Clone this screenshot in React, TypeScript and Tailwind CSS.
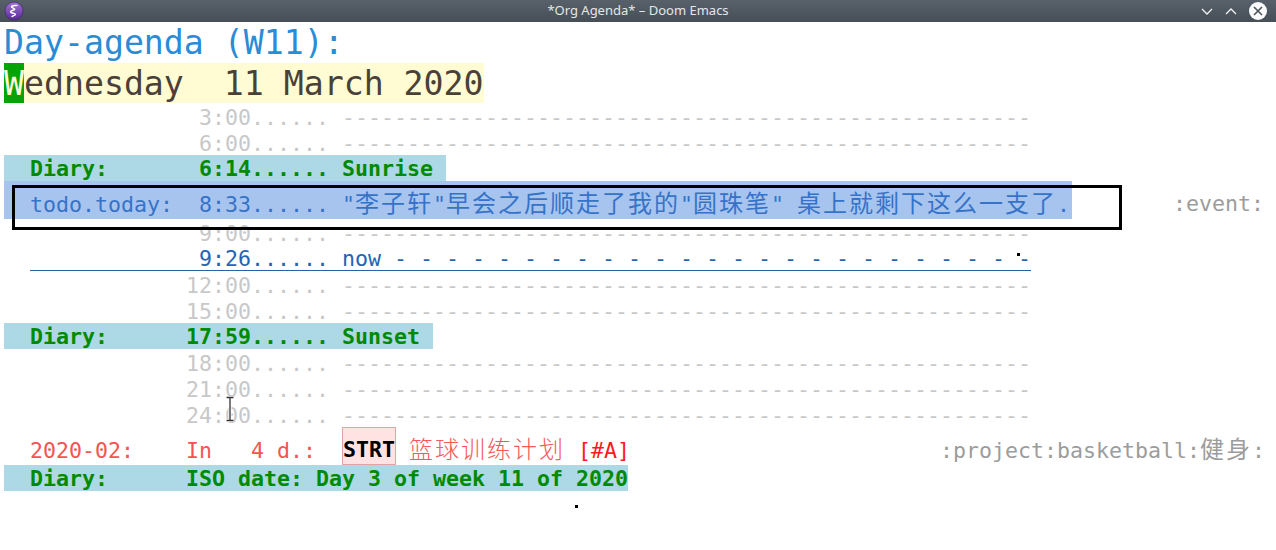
import React from 'react';

const mono = "font-['DejaVu_Sans_Mono','Liberation_Mono',monospace]";
const cjk = "font-['Noto_Sans_CJK_SC','Noto_Sans_CJK_JP',sans-serif] text-[24px] tracking-[2px]";

const dashes = '-'.repeat(53);
const nowLine = 'now' + ' -'.repeat(25);

function EmacsLogo() {
  return (
    <svg width="20" height="20" viewBox="0 0 20 20">
      <defs>
        <linearGradient id="emg" x1="0" y1="0" x2="0" y2="1">
          <stop offset="0" stopColor="#a274d8" />
          <stop offset="1" stopColor="#5b2a98" />
        </linearGradient>
      </defs>
      <circle cx="10" cy="10" r="9" fill="url(#emg)" stroke="#3e1c6c" strokeWidth="0.6" />
      <path
        d="M13 4.5 C10 4.3 7.2 4.8 7.4 5.9 C7.6 7 11 7.3 10.8 8.3 C10.6 9.3 6.4 9.3 6.5 10.9 C6.6 12.5 11.2 12.1 11.5 13.3 C11.7 14.3 8.8 14.6 8 15.5"
        fill="none"
        stroke="#fff"
        strokeWidth="1.4"
        strokeLinecap="round"
      />
    </svg>
  );
}

function TitleBar() {
  return (
    <div className="relative flex h-[22px] items-center bg-gradient-to-b from-[#58616a] to-[#464e56] px-[4px]">
      <EmacsLogo />
      <div className="absolute inset-x-0 top-0 flex h-[22px] items-center justify-center font-['Noto_Sans',sans-serif] text-[13px] text-[#e4e7ea]">
        *Org Agenda* – Doom Emacs
      </div>
      <div className="ml-auto flex items-center gap-[10px] pr-[4px]">
        <svg width="14" height="14" viewBox="0 0 14 14">
          <path d="M2 5 L7 10 L12 5" fill="none" stroke="#f2f2f2" strokeWidth="1.3" />
        </svg>
        <svg width="14" height="14" viewBox="0 0 14 14">
          <path d="M2 10 L7 5 L12 10" fill="none" stroke="#f2f2f2" strokeWidth="1.3" />
        </svg>
        <svg width="20" height="20" viewBox="0 0 20 20">
          <circle cx="10" cy="10" r="9" fill="#fafafa" />
          <path d="M6 6 L14 14 M14 6 L6 14" stroke="#4a525a" strokeWidth="1.6" />
        </svg>
      </div>
    </div>
  );
}

function GridLine({ time }: { time: string }) {
  const pad = ' '.repeat(20 - time.length - 1);
  return (
    <div className="h-[26px] overflow-hidden pt-[2px] leading-[26px] whitespace-pre text-[#c8c8c8]">
      {pad}
      {time}...... {dashes}
    </div>
  );
}

function DiaryLine({ pad, body }: { pad: number; body: string }) {
  return (
    <div className="h-[26px] leading-[26px] whitespace-pre">
      <span className="inline-block h-[26px] bg-[#add8e6] pt-[1px] font-bold text-[#008a00]">
        {'  Diary:'}
        {' '.repeat(pad)}
        {body}
      </span>
    </div>
  );
}

export default function App() {
  return (
    <div className="relative h-[550px] w-[1276px] overflow-hidden bg-white">
      <TitleBar />
      <div className={`${mono} relative px-[4px] text-[21.6px]`}>
        <div className="h-[41px] text-[33.2px] leading-[41px] text-[#2a8bd6]">Day-agenda (W11):</div>
        <div className="h-[40px] text-[33.2px] leading-[40px] whitespace-pre">
          <span className="inline-block h-[40px] bg-[#fffbd2] pt-[1px] text-[#4a4037]">
            <span className="-mt-[1px] inline-block h-[40px] bg-[#06a306] pt-[1px] text-[#fffbd2] align-top">W</span>
            ednesday  11 March 2020
          </span>
        </div>

        <GridLine time="3:00" />
        <GridLine time="6:00" />
        <DiaryLine pad={7} body="6:14...... Sunrise " />

        <div className="flex h-[38px] items-start justify-between whitespace-pre leading-[38px]">
          <span className="inline-block h-[38px] overflow-hidden bg-[#a7c4ef] pt-[2px] pr-[2px] text-[#3673c8]">
            {'  todo.today:  8:33...... "'}
            <span className={cjk}>李子轩</span>"<span className={cjk}>早会之后顺走了我的</span>"
            <span className={cjk}>圆珠笔</span>" <span className={cjk}>桌上就剩下这么一支了</span>.
          </span>
          <span className="pt-[4px] pr-[8px] text-[#9c9c9c]">:event:</span>
        </div>

        <GridLine time="9:00" />
        <div className="h-[26px] leading-[26px] whitespace-pre text-[#2464b4]">
          {'  '}
          <span className="inline-block h-[26px] border-b border-[#2a62aa] pt-[1px]">
            {'             9:26...... '}
            {nowLine}
          </span>
        </div>
        <GridLine time="12:00" />
        <GridLine time="15:00" />
        <DiaryLine pad={6} body="17:59...... Sunset " />
        <GridLine time="18:00" />
        <GridLine time="21:00" />
        <GridLine time="24:00" />

        <div className="flex h-[38px] items-start justify-between whitespace-pre leading-[38px]">
          <span className="pt-[2px] text-[#f65353]">
            {'  2020-02:    In   4 d.:  '}
            <span className="-mt-[2px] inline-block h-[38px] border border-[#dfa5a5] bg-[#ffe3e2] pt-[7px] align-top leading-[30px] font-bold text-black">
              STRT
            </span>{' '}
            <span className="font-['Noto_Sans_CJK_SC',sans-serif] text-[24px] font-light tracking-[2px] text-[#f55a5a]">
              篮球训练计划
            </span>{' '}
            <span className="text-[#ff1a1a]">[#A]</span>
          </span>
          <span className="pt-[2px] pr-[7px] text-[#9c9c9c]">
            :project:basketball:<span className={cjk}>健身</span>:
          </span>
        </div>
        <DiaryLine pad={6} body="ISO date: Day 3 of week 11 of 2020" />
      </div>

      {/* region box drawn over the selected entry */}
      <div className="pointer-events-none absolute left-[12px] top-[185px] h-[45px] w-[1110px] border-[3px] border-black" />
      {/* mouse I-beam */}
      <svg className="absolute left-[225px] top-[396px]" width="10" height="26" viewBox="0 0 10 26">
        <path d="M1.5 1.5 H8.5 M5 1.5 V24.5 M1.5 24.5 H8.5" stroke="#ffffff" strokeWidth="3" fill="none" />
        <path d="M1.5 1.5 H8.5 M5 1.5 V24.5 M1.5 24.5 H8.5" stroke="#333" strokeWidth="1.3" fill="none" />
      </svg>
      <div className="absolute left-[1017px] top-[253px] h-[3px] w-[3px] bg-black" />
      <div className="absolute left-[575px] top-[505px] h-[3px] w-[3px] bg-black" />
    </div>
  );
}
